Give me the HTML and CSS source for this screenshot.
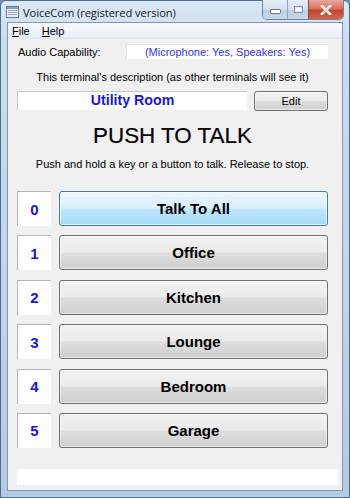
FILE: index.html
```html
<!DOCTYPE html>
<html>
<head>
<meta charset="utf-8">
<link rel="stylesheet" href="styles.css">
</head>
<body>
<div class="window">
  <div class="titlebar">
    <svg class="app-icon" width="13" height="12" viewBox="0 0 13 12">
      <rect x="0.5" y="0.5" width="12" height="11" fill="#e8eef5" stroke="#6a7a8c"/>
      <rect x="1" y="1" width="11" height="2" fill="#7fa3c9"/>
      <rect x="2" y="4" width="9" height="1" fill="#9aa8b8"/>
      <rect x="2" y="6" width="9" height="1" fill="#9aa8b8"/>
      <rect x="2" y="8" width="9" height="1" fill="#9aa8b8"/>
    </svg>
    <span class="title">VoiceCom (registered version)</span>
    <div class="caption-buttons">
      <div class="cap cap-min"><span class="min-glyph"></span></div>
      <div class="cap cap-max"><span class="max-glyph"></span></div>
      <div class="cap cap-close">
        <svg width="12" height="10" viewBox="0 0 12 10"><path d="M2 1 L10 9 M10 1 L2 9" stroke="#fff" stroke-width="2.6" stroke-linecap="square"/><path d="M2 1 L10 9 M10 1 L2 9" stroke="#5a5a5a" stroke-width="0.6" fill="none" opacity="0.4"/></svg>
      </div>
    </div>
  </div>
  <div class="client">
    <div class="menubar">
      <span class="menu-item"><u>F</u>ile</span>
      <span class="menu-item"><u>H</u>elp</span>
    </div>
    <div class="content">
      <div class="audio-row">
        <span class="label">Audio Capability:</span>
        <div class="field audio-field">(Microphone: Yes, Speakers: Yes)</div>
      </div>
      <div class="desc">This terminal's description (as other terminals will see it)</div>
      <div class="name-row">
        <div class="field name-field">Utility Room</div>
        <div class="btn edit-btn">Edit</div>
      </div>
      <div class="ptt">PUSH TO TALK</div>
      <div class="hint">Push and hold a key or a button to talk. Release to stop.</div>
      <div class="rows">
        <div class="row"><div class="num">0</div><div class="btn talk hot">Talk To All</div></div>
        <div class="row"><div class="num">1</div><div class="btn talk">Office</div></div>
        <div class="row"><div class="num">2</div><div class="btn talk">Kitchen</div></div>
        <div class="row"><div class="num">3</div><div class="btn talk">Lounge</div></div>
        <div class="row"><div class="num">4</div><div class="btn talk">Bedroom</div></div>
        <div class="row"><div class="num">5</div><div class="btn talk">Garage</div></div>
      </div>
      <div class="status"></div>
    </div>
  </div>
</div>
</body>
</html>
```

FILE: styles.css
```css
html, body {
  margin: 0;
  padding: 0;
  background: #6f8fae;
}
.window {
  width: 350px;
  height: 498px;
  box-sizing: border-box;
  display: flex;
  flex-direction: column;
  padding: 0 6px 6px 6px;
  border: 1px solid #4e6d8e;
  border-radius: 6px 6px 0 0;
  background: linear-gradient(180deg, #dbe8f5 0%, #cbdcef 8%, #c0d4ea 60%, #b2cae4 100%);
  font-family: "Liberation Sans", Arial, sans-serif;
  color: #000;
}
.titlebar {
  height: 20px;
  display: flex;
  align-items: center;
  position: relative;
  flex: none;
}
.app-icon {
  margin-left: -1px;
  margin-top: 2px;
}
.title {
  margin-left: 4px;
  margin-top: 2px;
  font-family: "Open Sans", "DejaVu Sans", sans-serif;
  font-size: 11.2px;
  color: #1a1a1a;
  letter-spacing: -0.1px;
}
.caption-buttons {
  position: absolute;
  right: -1px;
  top: -1px;
  display: flex;
  height: 19px;
  border: 1px solid #6d84a0;
  border-top: none;
  border-radius: 0 0 5px 5px;
  overflow: hidden;
}
.cap {
  height: 19px;
  display: flex;
  align-items: center;
  justify-content: center;
  box-sizing: border-box;
}
.cap-min {
  width: 25px;
  background: linear-gradient(180deg, #e6eef7 0%, #d2dfee 50%, #bccee3 51%, #c9d9ec 100%);
  border-right: 1px solid #8ea3bb;
}
.cap-max {
  width: 21px;
  background: linear-gradient(180deg, #e6eef7 0%, #d2dfee 50%, #bccee3 51%, #c9d9ec 100%);
  border-right: 1px solid #8b4a3a;
}
.cap-close {
  width: 34px;
  background: linear-gradient(180deg, #e9a99b 0%, #d7705c 45%, #c4452c 55%, #d4674a 100%);
}
.min-glyph {
  width: 9px;
  height: 3px;
  margin-top: 4px;
  background: #fff;
  border: 1px solid #6a7890;
  border-radius: 1px;
}
.max-glyph {
  width: 7px;
  height: 5px;
  border: 1px solid #8a97aa;
  background: #fff;
  box-shadow: inset 0 0 0 1px #dfe6ef;
}
.client {
  flex: 1;
  display: flex;
  flex-direction: column;
  background: #f0f0f0;
  border: 1px solid #8196b0;
  margin-top: 1px;
}
.menubar {
  height: 15px;
  display: flex;
  align-items: center;
  gap: 12px;
  padding-left: 4px;
  background: linear-gradient(180deg, #f6f8fb 0%, #e9eef5 100%);
  border-bottom: 1px solid #dde4ed;
  font-family: "Liberation Sans", Arial, sans-serif;
  font-size: 11px;
}
.menu-item u {
  text-decoration: underline;
  text-underline-offset: 1px;
}
.content {
  flex: 1;
  display: flex;
  flex-direction: column;
  padding: 5px 14px 5px 9px;
  font-size: 11px;
}
.audio-row {
  display: flex;
  align-items: center;
  height: 15px;
}
.label {
  width: 108px;
  padding-left: 1px;
}
.field {
  background: #fff;
  box-sizing: border-box;
}
.audio-field {
  flex: 1;
  height: 15px;
  line-height: 15px;
  text-align: center;
  color: #3333ee;
  border-top: 1px solid #e3e3e3;
  border-left: 1px solid #e3e3e3;
}
.desc {
  margin-top: 12px;
  text-align: center;
  line-height: 13px;
}
.name-row {
  margin-top: 7px;
  display: flex;
  gap: 7px;
  height: 19px;
}
.name-field {
  width: 230px;
  height: 19px;
  text-align: center;
  color: #1616e8;
  font-weight: bold;
  font-size: 14.2px;
  line-height: 17px;
  border-top: 1px solid #c8c8c8;
  border-left: 1px solid #c8c8c8;
}
.btn {
  box-sizing: border-box;
  border: 1px solid #707070;
  border-radius: 3px;
  background: linear-gradient(180deg, #f2f2f2 0%, #ebebeb 48%, #dddddd 52%, #cfcfcf 100%);
  box-shadow: inset 0 0 0 1px rgba(255,255,255,0.55);
  display: flex;
  align-items: center;
  justify-content: center;
  color: #000;
}
.edit-btn {
  flex: 1;
  height: 20px;
  font-size: 11px;
}
.ptt {
  margin-top: 13px;
  text-align: center;
  font-size: 22.4px;
  line-height: 26px;
  letter-spacing: 0;
  -webkit-text-stroke: 0.2px #000;
}
.hint {
  margin-top: 9px;
  text-align: center;
  line-height: 13px;
}
.rows {
  margin-top: 20px;
  display: flex;
  flex-direction: column;
  gap: 9.4px;
}
.row {
  display: flex;
  gap: 8px;
  height: 35px;
}
.num {
  width: 34px;
  box-sizing: border-box;
  background: #fff;
  border-top: 1px solid #b5b5b5;
  border-left: 1px solid #b5b5b5;
  display: flex;
  align-items: center;
  justify-content: center;
  color: #1414ee;
  font-weight: bold;
  font-size: 15px;
}
.talk {
  flex: 1;
  height: 35px;
  font-weight: bold;
  font-size: 15px;
}
.talk.hot {
  border-color: #3c7fb1;
  background: linear-gradient(180deg, #eaf6fd 0%, #d9f0fc 48%, #bee6fd 52%, #a7d9f5 100%);
  box-shadow: inset 0 0 0 1px rgba(255,255,255,0.7);
}
.status {
  margin-top: auto;
  margin-right: -10px;
  height: 16px;
  background: #fff;
}
```
